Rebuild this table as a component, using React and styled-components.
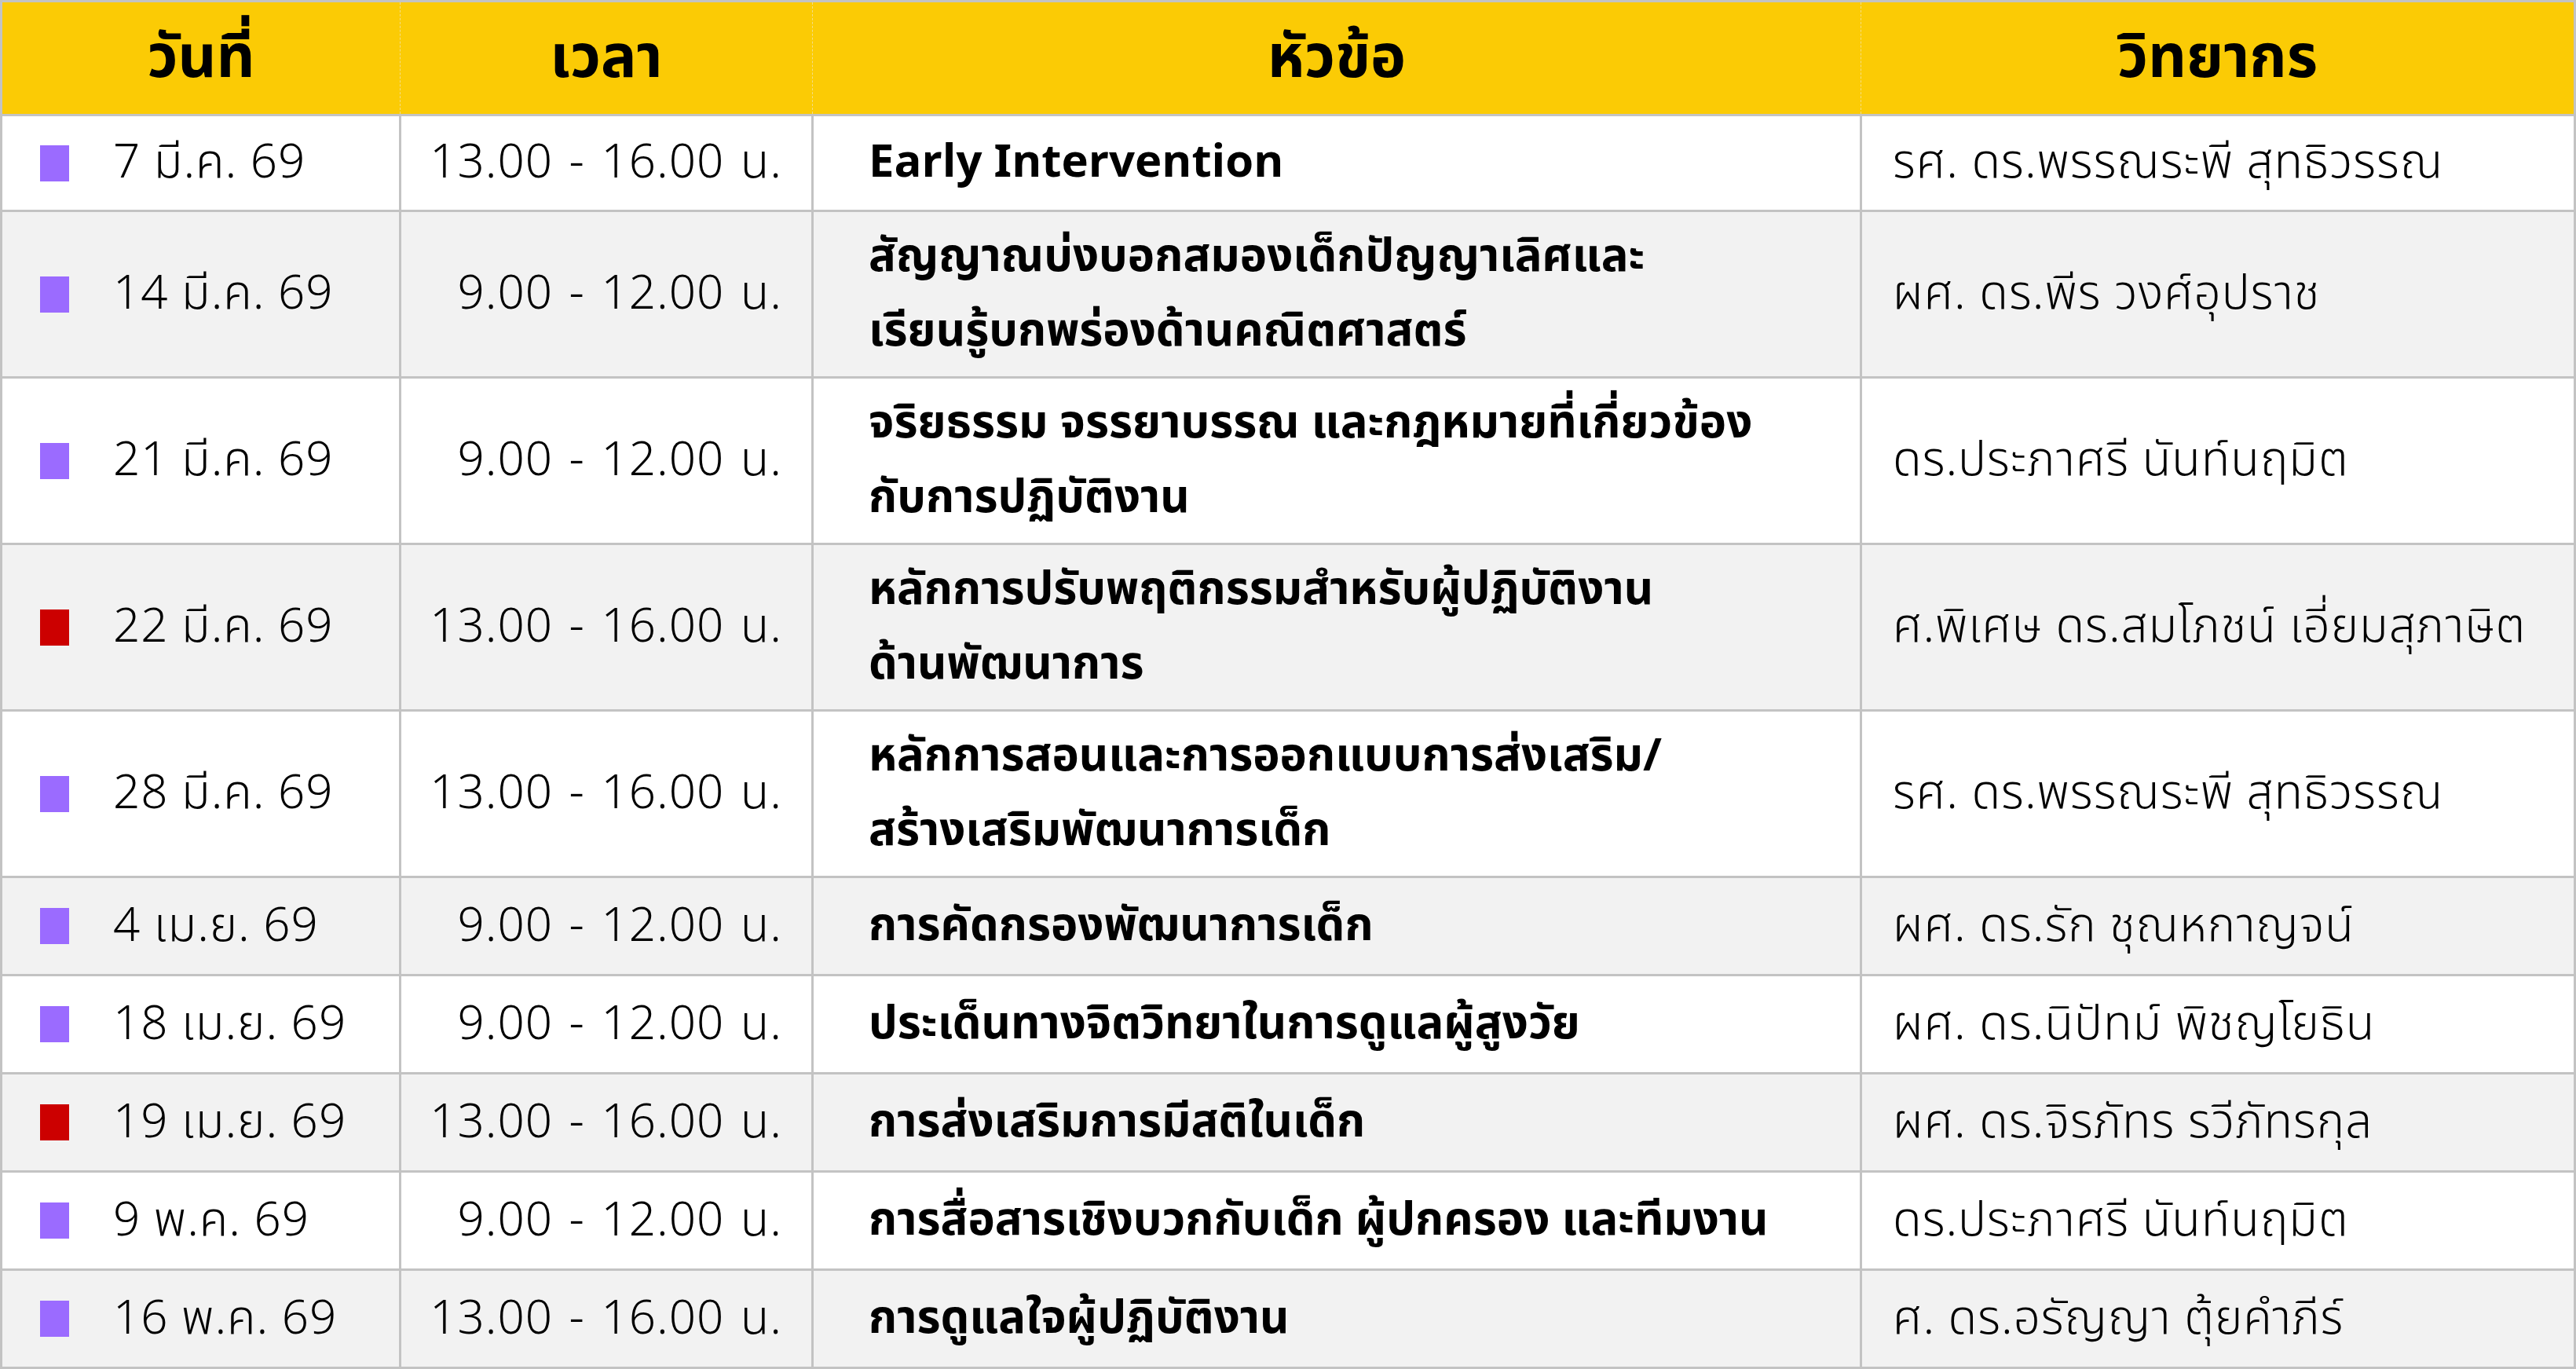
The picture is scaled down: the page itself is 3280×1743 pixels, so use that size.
import React from 'react';
import styled, {createGlobalStyle} from 'styled-components';

const GlobalStyle = createGlobalStyle`
  html, body {
    margin: 0;
    padding: 0;
    background: #ffffff;
  }
  body {
    font-family: "Noto Sans Thai", "Noto Sans", sans-serif;
    color: #000000;
  }
`;

const Table = styled.table`
  width: 3280px;
  table-layout: fixed;
  border-collapse: collapse;
  border: 3px solid #c3c3c3;
`;

const Th = styled.th`
  height: 142px;
  padding: 0;
  background: #fbcb05;
  font-size: 76px;
  font-weight: 700;
  text-align: center;
  vertical-align: middle;
  border-top: 3px solid #c3c3c3;
  border-bottom: 3px solid #c3c3c3;
  border-left: 1px dashed #f3dd85;
  &:first-child {
    border-left: 3px solid #c3c3c3;
  }
`;

const Tr = styled.tr`
  background: ${p => (p.$alt ? '#f2f2f2' : '#ffffff')};
  height: ${p => p.$h}px;
`;

const Td = styled.td`
  padding: 0;
  border: 3px solid #c3c3c3;
  vertical-align: middle;
  font-size: 60px;
  font-weight: 300;
  letter-spacing: 1px;
  line-height: 95px;
  white-space: nowrap;
`;

const DateCell = styled(Td)`
  padding-left: 48px;
`;

const DateWrap = styled.div`
  display: flex;
  align-items: center;
  gap: 56px;
`;

const Marker = styled.span`
  display: block;
  width: 37px;
  height: 46px;
  background: ${p => (p.$red ? '#cc0000' : '#9b6bff')};
`;

const TimeCell = styled(Td)`
  text-align: right;
  padding-right: 37px;
  word-spacing: 4px;
`;

const TopicCell = styled(Td)`
  padding-left: 70px;
  font-size: 58px;
  font-weight: 700;
  letter-spacing: 0;
`;

const SpeakerCell = styled(Td)`
  padding-left: 39px;
`;

const rows = [
    {red: false, date: '7 มี.ค. 69', time: '13.00 - 16.00 น.', topic: ['Early Intervention'], speaker: 'รศ. ดร.พรรณระพี สุทธิวรรณ'},
    {red: false, date: '14 มี.ค. 69', time: '9.00 - 12.00 น.', topic: ['สัญญาณบ่งบอกสมองเด็กปัญญาเลิศและ', 'เรียนรู้บกพร่องด้านคณิตศาสตร์'], speaker: 'ผศ. ดร.พีร วงศ์อุปราช'},
    {red: false, date: '21 มี.ค. 69', time: '9.00 - 12.00 น.', topic: ['จริยธรรม จรรยาบรรณ และกฎหมายที่เกี่ยวข้อง', 'กับการปฏิบัติงาน'], speaker: 'ดร.ประภาศรี นันท์นฤมิต'},
    {red: true, date: '22 มี.ค. 69', time: '13.00 - 16.00 น.', topic: ['หลักการปรับพฤติกรรมสำหรับผู้ปฏิบัติงาน', 'ด้านพัฒนาการ'], speaker: 'ศ.พิเศษ ดร.สมโภชน์ เอี่ยมสุภาษิต'},
    {red: false, date: '28 มี.ค. 69', time: '13.00 - 16.00 น.', topic: ['หลักการสอนและการออกแบบการส่งเสริม/', 'สร้างเสริมพัฒนาการเด็ก'], speaker: 'รศ. ดร.พรรณระพี สุทธิวรรณ'},
    {red: false, date: '4 เม.ย. 69', time: '9.00 - 12.00 น.', topic: ['การคัดกรองพัฒนาการเด็ก'], speaker: 'ผศ. ดร.รัก ชุณหกาญจน์'},
    {red: false, date: '18 เม.ย. 69', time: '9.00 - 12.00 น.', topic: ['ประเด็นทางจิตวิทยาในการดูแลผู้สูงวัย'], speaker: 'ผศ. ดร.นิปัทม์ พิชญโยธิน'},
    {red: true, date: '19 เม.ย. 69', time: '13.00 - 16.00 น.', topic: ['การส่งเสริมการมีสติในเด็ก'], speaker: 'ผศ. ดร.จิรภัทร รวีภัทรกุล'},
    {red: false, date: '9 พ.ค. 69', time: '9.00 - 12.00 น.', topic: ['การสื่อสารเชิงบวกกับเด็ก ผู้ปกครอง และทีมงาน'], speaker: 'ดร.ประภาศรี นันท์นฤมิต'},
    {red: false, date: '16 พ.ค. 69', time: '13.00 - 16.00 น.', topic: ['การดูแลใจผู้ปฏิบัติงาน'], speaker: 'ศ. ดร.อรัญญา ตุ้ยคำภีร์'},
];

function App() {
    return (
        <>
            <GlobalStyle/>
            <Table>
                <colgroup>
                    <col style={{width: '508px'}}/>
                    <col style={{width: '525px'}}/>
                    <col style={{width: '1335px'}}/>
                    <col style={{width: '909px'}}/>
                </colgroup>
                <thead>
                <tr>
                    <Th>วันที่</Th>
                    <Th>เวลา</Th>
                    <Th>หัวข้อ</Th>
                    <Th>วิทยากร</Th>
                </tr>
                </thead>
                <tbody>
                {rows.map((row, i) => (
                    <Tr key={i} $alt={i % 2 === 1} $h={row.topic.length > 1 ? 212 : (i === 0 ? 122 : 125)}>
                        <DateCell>
                            <DateWrap>
                                <Marker $red={row.red}/>
                                <span>{row.date}</span>
                            </DateWrap>
                        </DateCell>
                        <TimeCell>{row.time}</TimeCell>
                        <TopicCell>
                            {row.topic.map((line, j) => (
                                <div key={j}>{line}</div>
                            ))}
                        </TopicCell>
                        <SpeakerCell>{row.speaker}</SpeakerCell>
                    </Tr>
                ))}
                </tbody>
            </Table>
        </>
    );
}

export default App;
